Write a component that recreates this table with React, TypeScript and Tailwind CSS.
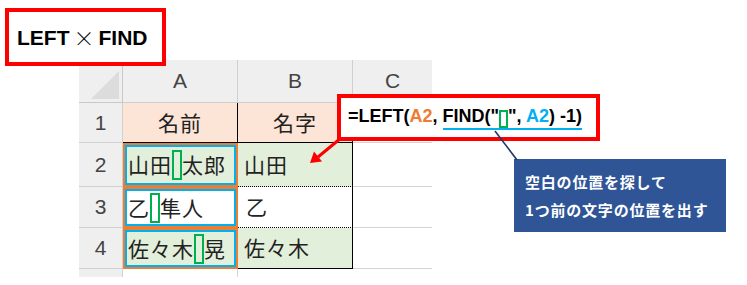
const jp = "font-['Noto_Sans_CJK_JP',sans-serif]";
const lat = "font-['Liberation_Sans',sans-serif]";

function Space() {
  return <span className="inline-block w-[10px] h-[30px] border-2 border-[#00b050] shrink-0" />;
}

function NameCell({ bg, left, right }: { bg: string; left: string; right: string }) {
  return (
    <div className="border-2 border-[#ed7d31] h-full">
      <div
        className={`h-full border-2 border-[#00b0f0] ${bg} flex items-center pl-[1px] text-[21px] tracking-[1px] text-[#222] ${jp}`}
      >
        <span>{left}</span>
        <Space />
        <span>{right}</span>
      </div>
    </div>
  );
}

export default function App() {
  const rowHead = `bg-[#efefef] border-r border-b border-[#d0d0d0] flex items-center justify-center text-[21px] text-[#444] ${lat}`;
  const colHead = `bg-[#efefef] border-r border-b border-[#cfcfcf] flex items-center justify-center text-[21px] text-[#444] ${lat}`;
  const cellB = `border-r border-b border-black flex items-center text-[21px] tracking-[1px] text-[#222] ${jp}`;

  return (
    <div className="relative w-[747px] h-[285px] bg-white overflow-hidden">
      <div className="pt-[60px] pl-[79px]">
        <div className="grid grid-cols-[44px_115px_115px_79px] grid-rows-[43px_40px_44px_41px_41px_8px]">
          {/* header row */}
          <div className="bg-[#efefef] border-r border-b border-[#c8c8c8] relative">
            <div className="absolute right-[3px] bottom-[3px] w-[28px] h-[28px] bg-[#dcdcdc] [clip-path:polygon(100%_0,100%_100%,0_100%)]" />
          </div>
          <div className={colHead}>A</div>
          <div className={colHead}>B</div>
          <div className={`${colHead} border-r-0`}>C</div>

          {/* row 1 */}
          <div className={rowHead}>1</div>
          <div className={`bg-[#fce4d6] ${cellB} justify-center`}>名前</div>
          <div className={`bg-[#fce4d6] ${cellB} justify-center`}>名字</div>
          <div className="border-b border-[#d4d4d4]" />

          {/* row 2 */}
          <div className={rowHead}>2</div>
          <NameCell bg="bg-[#e2efda]" left="山田" right="太郎" />
          <div className={`bg-[#e2efda] ${cellB} [border-bottom-style:dotted] pl-[6px]`}>山田</div>
          <div className="border-b border-[#d4d4d4]" />

          {/* row 3 */}
          <div className={rowHead}>3</div>
          <NameCell bg="bg-white" left="乙" right="隼人" />
          <div className={`bg-white ${cellB} [border-bottom-style:dotted] pl-[8px]`}>乙</div>
          <div className="border-b border-[#d4d4d4]" />

          {/* row 4 */}
          <div className={rowHead}>4</div>
          <NameCell bg="bg-[#e2efda]" left="佐々木" right="晃" />
          <div className={`bg-[#e2efda] ${cellB} pl-[6px]`}>佐々木</div>
          <div className="border-b border-[#d4d4d4]" />

          {/* tail */}
          <div className="bg-[#efefef] border-r border-[#d0d0d0]" />
          <div className="border-r border-[#d4d4d4]" />
          <div />
          <div />
        </div>
      </div>

      {/* title */}
      <div className="absolute left-[5px] top-[8px] w-[161px] h-[58px] border-4 border-[#ff0000] bg-white flex items-center pl-[8px] pt-[2px]">
        <span className={`text-[21px] font-bold text-black ${lat}`}>LEFT</span>
        <span className={`text-[21px] font-light text-black mx-[4px] ${jp}`}>×</span>
        <span className={`text-[21px] font-bold text-black ${lat}`}>FIND</span>
      </div>

      {/* formula */}
      <div className="absolute left-[337px] top-[94px] w-[263px] h-[47px] border-4 border-[#ff0000] bg-white flex items-center pl-[7px]">
        <div className={`text-[18px] font-bold text-black leading-[22px] whitespace-pre ${lat}`}>
          =LEFT(<span className="text-[#ed7d31]">A2</span>,{" "}
          <span className="inline-block border-b-2 border-[#00b0f0]">
            FIND(&quot;
            <span className="inline-block w-[9px] h-[18px] border-2 border-[#00b050] align-[-6px]" />
            &quot;, <span className="text-[#00b0f0]">A2</span>) -1)
          </span>
        </div>
      </div>

      {/* callout */}
      <div className={`absolute left-[514px] top-[159px] w-[212px] h-[73px] bg-[#2f5597] pl-[11px] pt-[9px] text-white font-bold text-[15px] tracking-[0.8px] leading-[28px] ${jp}`}>
        <div>空白の位置を探して</div>
        <div>1つ前の文字の位置を出す</div>
      </div>

      <svg className="absolute left-0 top-0 pointer-events-none" width="747" height="285">
        <line x1="495" y1="131" x2="517" y2="160" stroke="#203864" strokeWidth="1.6" />
        <line x1="341" y1="138" x2="318" y2="157" stroke="#ff0000" strokeWidth="3" />
        <polygon points="310,163 322,161.5 314,151.5" fill="#ff0000" />
      </svg>
    </div>
  );
}
